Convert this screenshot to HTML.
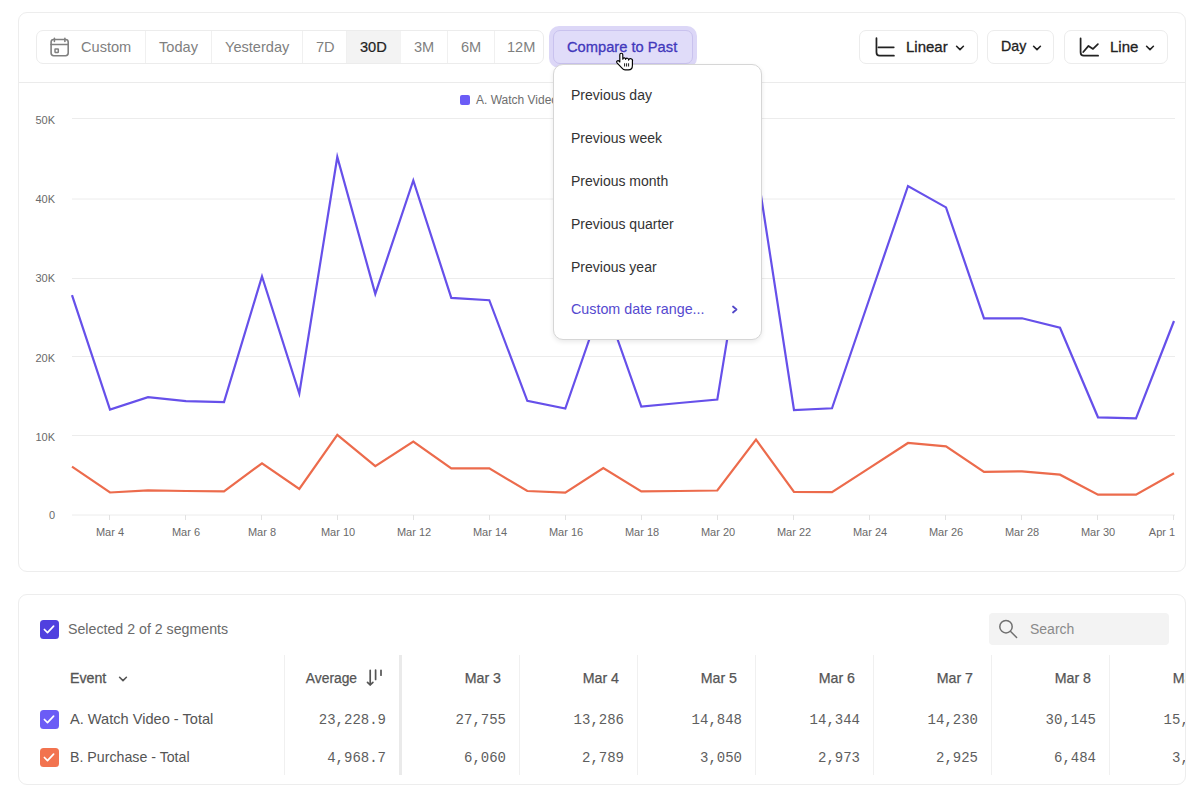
<!DOCTYPE html><html><head><meta charset="utf-8"><style>
*{box-sizing:border-box;margin:0;padding:0}
html,body{width:1200px;height:802px;overflow:hidden;background:#fff;font-family:"Liberation Sans",sans-serif;color:#333}
.a{position:absolute}
.md{-webkit-text-stroke:0.3px currentColor}
.t{position:absolute;white-space:nowrap;line-height:1}
.seg{position:absolute;top:0;height:100%;width:1px;background:#f0f0f0}
.btn{position:absolute;top:30px;height:34px;border:1px solid #ececec;border-radius:7px;background:#fff}
.yl{position:absolute;right:1145px;font-size:11px;color:#6a6a6a;line-height:1}
.xl{position:absolute;font-size:11px;color:#6a6a6a;line-height:1;width:60px;text-align:center;top:527px}
.mi{position:absolute;left:17px;font-size:14px;color:#333;line-height:1;white-space:nowrap}
.num{position:absolute;font-family:"Liberation Mono",monospace;font-size:14px;color:#5e5e5e;line-height:1;white-space:nowrap;text-align:right;width:80px}
.hd{position:absolute;font-size:14.2px;color:#555;-webkit-text-stroke:0.25px #555;line-height:1;white-space:nowrap;text-align:right;width:80px}
.cs{position:absolute;top:655px;height:120px;width:1px;background:#f0f0f0}
</style></head><body>
<div class="a" style="left:18px;top:12px;width:1168px;height:560px;border:1px solid #ededed;border-radius:9px"></div>
<div class="a" style="left:19px;top:82px;width:1166px;height:1px;background:#ebebeb"></div>
<div class="a" style="left:36px;top:30px;width:508px;height:34px;border:1px solid #ececec;border-radius:7px;overflow:hidden">
<div class="a" style="left:309px;top:0;width:55px;height:32px;background:#f3f3f3"></div>
<div class="seg" style="left:108px"></div>
<div class="seg" style="left:174px"></div>
<div class="seg" style="left:265px"></div>
<div class="seg" style="left:309px"></div>
<div class="seg" style="left:410px"></div>
<div class="seg" style="left:457px"></div>
</div>
<svg class="a" style="left:45px;top:33px" width="30" height="28" viewBox="0 0 30 28" fill="none" stroke="#808080" stroke-width="1.6" stroke-linecap="round"><rect x="6.1" y="6.5" width="17.1" height="16.2" rx="2.6"/><path d="M6.1 11.5H23.2M9.4 5.2V8.4M19.9 5.2V8.4"/><rect x="10" y="16.1" width="3.3" height="3.3" rx="0.3" stroke-width="1.5"/></svg>
<div class="t" style="left:81px;top:40px;font-size:14.6px;color:#7f7f7f;">Custom</div>
<div class="t" style="left:159px;top:40px;font-size:14.6px;color:#7f7f7f;">Today</div>
<div class="t" style="left:225px;top:40px;font-size:14.6px;color:#7f7f7f;">Yesterday</div>
<div class="t" style="left:316px;top:40px;font-size:14.6px;color:#7f7f7f;">7D</div>
<div class="t" style="left:360px;top:40px;font-size:14.6px;color:#222;-webkit-text-stroke:0.2px #222;">30D</div>
<div class="t" style="left:414px;top:40px;font-size:14.6px;color:#7f7f7f;">3M</div>
<div class="t" style="left:461px;top:40px;font-size:14.6px;color:#7f7f7f;">6M</div>
<div class="t" style="left:507px;top:40px;font-size:14.6px;color:#7f7f7f;">12M</div>
<div class="a" style="left:549px;top:26px;width:148px;height:42px;border-radius:10px;background:#dcd7f7"></div>
<div class="a" style="left:553px;top:30px;width:140px;height:34px;border-radius:7px;background:#e0dcf9;border:1px solid #c9c2ee"></div>
<div class="t md" style="left:567px;top:40px;font-size:14.7px;color:#4238bc">Compare to Past</div>
<div class="btn" style="left:859px;width:119px"></div>
<svg class="a" style="left:870px;top:33px" width="30" height="28" viewBox="0 0 30 28" fill="none" stroke="#222" stroke-width="1.75" stroke-linecap="round" stroke-linejoin="round"><path d="M6.46 5.2V19.2Q6.46 22.7 9.5 22.7H23.9"/><path d="M8.4 14.3H23.75"/></svg>
<div class="t md" style="left:906px;top:39.4px;font-size:15px;color:#222">Linear</div>
<svg class="a" style="left:955px;top:44.5px" width="10" height="7" viewBox="0 0 10 7" fill="none" stroke="#222" stroke-width="1.6" stroke-linecap="round" stroke-linejoin="round"><path d="M1.6 1.3L5 4.6L8.4 1.3"/></svg>
<div class="btn" style="left:987px;width:67px"></div>
<div class="t md" style="left:1001px;top:39.4px;font-size:14.2px;color:#222">Day</div>
<svg class="a" style="left:1031.5px;top:44.5px" width="10" height="7" viewBox="0 0 10 7" fill="none" stroke="#222" stroke-width="1.6" stroke-linecap="round" stroke-linejoin="round"><path d="M1.6 1.3L5 4.6L8.4 1.3"/></svg>
<div class="btn" style="left:1064px;width:104px"></div>
<svg class="a" style="left:1074px;top:33px" width="30" height="28" viewBox="0 0 30 28" fill="none" stroke="#222" stroke-width="1.75" stroke-linecap="round" stroke-linejoin="round"><path d="M6.6 5.4V19.2Q6.6 22.7 9.7 22.7H24.1"/><path d="M9.25 19L14.5 12.9L19 15.9L23.9 11.2"/></svg>
<div class="t md" style="left:1110px;top:39.4px;font-size:15px;color:#222">Line</div>
<svg class="a" style="left:1145px;top:44.5px" width="10" height="7" viewBox="0 0 10 7" fill="none" stroke="#222" stroke-width="1.6" stroke-linecap="round" stroke-linejoin="round"><path d="M1.6 1.3L5 4.6L8.4 1.3"/></svg>
<div class="a" style="left:460px;top:95px;width:10px;height:10px;border-radius:2px;background:#6b5cf6"></div>
<div class="t" style="left:476px;top:94px;font-size:12px;color:#6e6e6e">A. Watch Video - Total</div>
<svg class="a" style="left:0;top:0" width="1200" height="560"><g stroke="#ececec" stroke-width="1"><line x1="72" y1="118.5" x2="1175" y2="118.5"/><line x1="72" y1="199" x2="1175" y2="199"/><line x1="72" y1="278.5" x2="1175" y2="278.5"/><line x1="72" y1="356.5" x2="1175" y2="356.5"/><line x1="72" y1="435.5" x2="1175" y2="435.5"/><line x1="72" y1="515" x2="1175" y2="515"/></g><g stroke="#e2e2e2" stroke-width="1"><line x1="109.5" y1="515" x2="109.5" y2="520"/><line x1="185.5" y1="515" x2="185.5" y2="520"/><line x1="261.5" y1="515" x2="261.5" y2="520"/><line x1="337.5" y1="515" x2="337.5" y2="520"/><line x1="413.5" y1="515" x2="413.5" y2="520"/><line x1="489.5" y1="515" x2="489.5" y2="520"/><line x1="565.5" y1="515" x2="565.5" y2="520"/><line x1="641.5" y1="515" x2="641.5" y2="520"/><line x1="717.5" y1="515" x2="717.5" y2="520"/><line x1="793.5" y1="515" x2="793.5" y2="520"/><line x1="869.5" y1="515" x2="869.5" y2="520"/><line x1="945.5" y1="515" x2="945.5" y2="520"/><line x1="1021.5" y1="515" x2="1021.5" y2="520"/><line x1="1097.5" y1="515" x2="1097.5" y2="520"/><line x1="1173.5" y1="515" x2="1173.5" y2="520"/></g><polyline fill="none" stroke="#ec6b4c" stroke-width="2.2" stroke-linejoin="miter" stroke-miterlimit="6" points="72,466.6 110,492.5 148,490.4 186,491 224,491.4 262,463.3 299.3,489 337.3,434.8 375.3,466.2 413.3,441.5 451.3,468.4 489.3,468.4 527.3,491 565.3,492.6 603.3,468 641.3,491.4 679.3,491 717.3,490.5 756,439.5 794,492 832,492.2 870,467.6 908,443 946,446.3 984,471.8 1022,471.4 1060,474.7 1098,494.6 1136,494.6 1174,473.3"/><polyline fill="none" stroke="#6650ea" stroke-width="2.2" stroke-linejoin="miter" stroke-miterlimit="6" points="72,295.2 110,409.5 148,397.2 186,401.2 224,402.1 262,276.4 299.3,393.5 337.3,157 375.3,293.9 413.3,180.4 451.3,297.9 489.3,300.2 527.3,400.8 565.3,408.5 603.3,299 641.3,406.5 679.3,403 717.3,399.6 756,163 794,410 832,408.3 870,297 908,186 946,207.4 984,318.3 1022,318.3 1060,327.8 1098,417.3 1136,418.3 1174,321"/></svg>
<div class="yl" style="top:115px">50K</div>
<div class="yl" style="top:194px">40K</div>
<div class="yl" style="top:273.4px">30K</div>
<div class="yl" style="top:352.6px">20K</div>
<div class="yl" style="top:432px">10K</div>
<div class="yl" style="top:510px">0</div>
<div class="xl" style="left:80px">Mar 4</div>
<div class="xl" style="left:156px">Mar 6</div>
<div class="xl" style="left:232px">Mar 8</div>
<div class="xl" style="left:308px">Mar 10</div>
<div class="xl" style="left:384px">Mar 12</div>
<div class="xl" style="left:460px">Mar 14</div>
<div class="xl" style="left:536px">Mar 16</div>
<div class="xl" style="left:612px">Mar 18</div>
<div class="xl" style="left:688px">Mar 20</div>
<div class="xl" style="left:764px">Mar 22</div>
<div class="xl" style="left:840px">Mar 24</div>
<div class="xl" style="left:916px">Mar 26</div>
<div class="xl" style="left:992px">Mar 28</div>
<div class="xl" style="left:1068px">Mar 30</div>
<div class="xl" style="left:1132px">Apr 1</div>
<div class="a" style="left:553px;top:64px;width:209px;height:276px;border:1px solid #d6d6d6;border-radius:10px;background:#fff;box-shadow:0 2px 5px rgba(0,0,0,0.09)">
<div class="mi" style="top:23px">Previous day</div>
<div class="mi" style="top:66px">Previous week</div>
<div class="mi" style="top:109px">Previous month</div>
<div class="mi" style="top:152px">Previous quarter</div>
<div class="mi" style="top:195px">Previous year</div>
<div class="mi" style="top:237.4px;color:#5549cf;font-size:14.3px">Custom date range...</div>
<svg class="a" style="left:177px;top:239.5px" width="8" height="11" viewBox="0 0 8 11" fill="none" stroke="#5247c8" stroke-width="1.8" stroke-linecap="round" stroke-linejoin="round"><path d="M2 1.5L5.5 4.5L2 7.5"/></svg>
</div>
<svg class="a" style="left:614px;top:51px" width="22" height="22" viewBox="0 0 22 22"><path d="M5.8 3.7A1.5 1.5 0 0 1 8.8 3.7V8.2A1.4 1.4 0 0 1 11.6 8.4A1.5 1.5 0 0 1 14.6 9.1A1.9 1.9 0 0 1 18.4 10.3V14.5Q18.4 18.9 14.5 18.9H11Q9.5 18.9 8.5 17.7L3 11.9A1.3 1.3 0 0 1 5 10.1L5.8 11Z" fill="#fff" stroke="#000" stroke-width="1.15" stroke-linejoin="round"/><path d="M10.6 12.3V15.5M12.6 12.3V15.5M14.6 12.3V15.5" stroke="#000" stroke-width="0.9"/></svg>
<div class="a" style="left:18px;top:594px;width:1168px;height:191px;border:1px solid #ededed;border-radius:9px"></div>
<div class="a" style="left:40px;top:619.5px;width:19px;height:19px;border-radius:3.5px;background:#5040df"></div><svg class="a" style="left:40px;top:619.5px" width="19" height="19" viewBox="0 0 19 19" fill="none" stroke="#fff" stroke-width="1.7" stroke-linecap="round" stroke-linejoin="round"><path d="M4.4 9.5L7.5 12.6L13.6 6.1"/></svg>
<div class="t" style="left:68px;top:622px;font-size:14.2px;color:#6a6a6a">Selected 2 of 2 segments</div>
<div class="a" style="left:989px;top:613px;width:180px;height:32px;border-radius:4px;background:#f3f3f3"></div>
<svg class="a" style="left:993px;top:614px" width="30" height="28" viewBox="0 0 30 28" fill="none" stroke="#707070" stroke-width="1.5" stroke-linecap="round"><circle cx="13" cy="12.7" r="6.2"/><path d="M17.6 17.5L23.6 23.5"/></svg>
<div class="t" style="left:1030px;top:622px;font-size:14px;color:#8a8a8a">Search</div>
<div class="t md" style="left:70px;top:671px;font-size:14.2px;color:#555">Event</div>
<svg class="a" style="left:118px;top:676px" width="10" height="7" viewBox="0 0 10 7" fill="none" stroke="#555" stroke-width="1.6" stroke-linecap="round" stroke-linejoin="round"><path d="M1.6 1.3L5 4.6L8.4 1.3"/></svg>
<div class="cs" style="left:284px"></div>
<div class="hd" style="left:277px;top:671.5px;font-size:13.8px">Average</div>
<svg class="a" style="left:355px;top:664px" width="35" height="28" viewBox="0 0 35 28" fill="none" stroke="#555" stroke-width="1.7" stroke-linecap="round" stroke-linejoin="round"><path d="M15.2 6.3V21M12.5 18.3L15.2 21L17.9 18.3M20.6 6.1V15.5M26 6.3V11.2"/></svg>
<div class="a" style="left:399px;top:655px;width:3px;height:120px;background:#eaeaea"></div>
<div class="cs" style="left:519px"></div>
<div class="cs" style="left:637px"></div>
<div class="cs" style="left:755px"></div>
<div class="cs" style="left:873px"></div>
<div class="cs" style="left:991px"></div>
<div class="cs" style="left:1109px"></div>
<div class="a" style="left:0;top:0;width:1185px;height:802px;overflow:hidden">
<div class="hd" style="left:421px;top:671px">Mar 3</div>
<div class="num" style="left:426px;top:713px">27,755</div>
<div class="num" style="left:426px;top:750.5px">6,060</div>
<div class="hd" style="left:539px;top:671px">Mar 4</div>
<div class="num" style="left:544px;top:713px">13,286</div>
<div class="num" style="left:544px;top:750.5px">2,789</div>
<div class="hd" style="left:657px;top:671px">Mar 5</div>
<div class="num" style="left:662px;top:713px">14,848</div>
<div class="num" style="left:662px;top:750.5px">3,050</div>
<div class="hd" style="left:775px;top:671px">Mar 6</div>
<div class="num" style="left:780px;top:713px">14,344</div>
<div class="num" style="left:780px;top:750.5px">2,973</div>
<div class="hd" style="left:893px;top:671px">Mar 7</div>
<div class="num" style="left:898px;top:713px">14,230</div>
<div class="num" style="left:898px;top:750.5px">2,925</div>
<div class="hd" style="left:1011px;top:671px">Mar 8</div>
<div class="num" style="left:1016px;top:713px">30,145</div>
<div class="num" style="left:1016px;top:750.5px">6,484</div>
<div class="hd" style="left:1129px;top:671px">Mar 9</div>
<div class="num" style="left:1134px;top:713px">15,321</div>
<div class="num" style="left:1134px;top:750.5px">3,101</div>
<div class="num" style="left:306px;top:713px">23,228.9</div>
<div class="num" style="left:306px;top:750.5px">4,968.7</div>
</div>
<div class="a" style="left:40px;top:710px;width:19px;height:19px;border-radius:3.5px;background:#6b5cf6"></div><svg class="a" style="left:40px;top:710px" width="19" height="19" viewBox="0 0 19 19" fill="none" stroke="#fff" stroke-width="1.7" stroke-linecap="round" stroke-linejoin="round"><path d="M4.4 9.5L7.5 12.6L13.6 6.1"/></svg>
<div class="t" style="left:70px;top:712px;font-size:14.6px;color:#555">A. Watch Video - Total</div>
<div class="a" style="left:40px;top:748px;width:19px;height:19px;border-radius:3.5px;background:#f2734f"></div><svg class="a" style="left:40px;top:748px" width="19" height="19" viewBox="0 0 19 19" fill="none" stroke="#fff" stroke-width="1.7" stroke-linecap="round" stroke-linejoin="round"><path d="M4.4 9.5L7.5 12.6L13.6 6.1"/></svg>
<div class="t" style="left:70px;top:750px;font-size:14.2px;color:#555">B. Purchase - Total</div>
</body></html>
